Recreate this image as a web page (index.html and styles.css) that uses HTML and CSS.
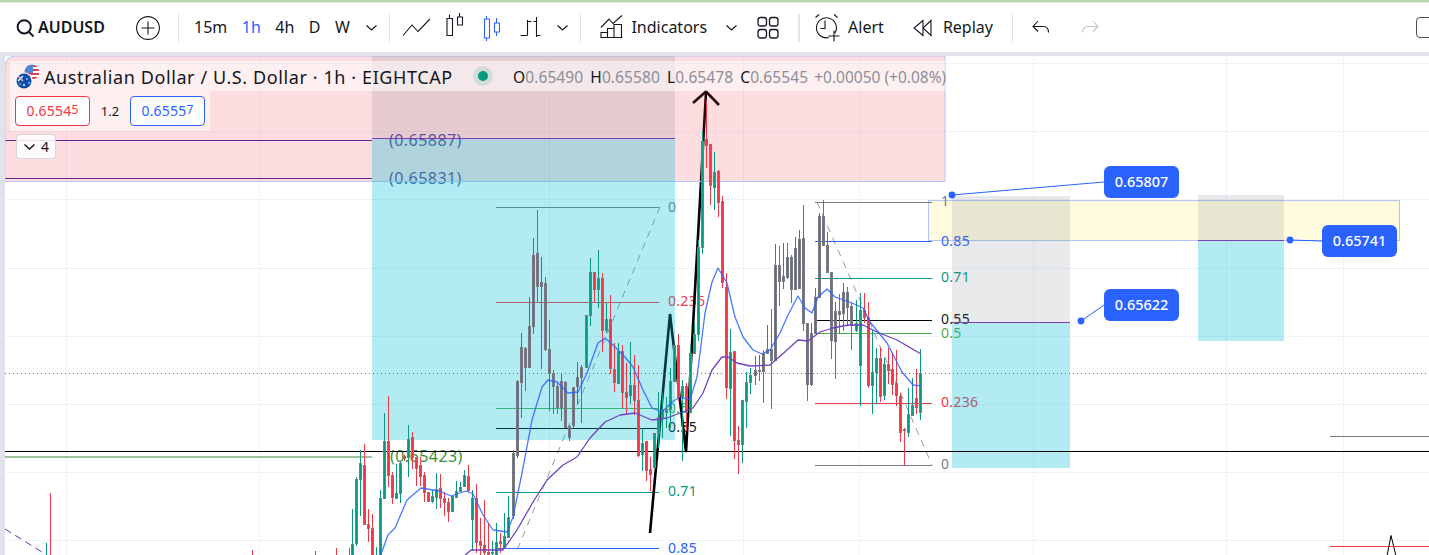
FILE: index.html
```html
<!DOCTYPE html>
<html lang="en">
<head>
<meta charset="utf-8">
<title>AUDUSD chart</title>
<link rel="stylesheet" href="styles.css">
</head>
<body>
<div class="topline"></div>
<header class="toolbar">
  <svg class="ic search" viewBox="0 0 18 28"><circle cx="8.2" cy="12.8" r="6.6"/><path d="M13 18l4.5 4.5"/></svg>
  <span class="symbol">AUDUSD</span>
  <svg class="ic plus" viewBox="0 0 24 28"><circle cx="12" cy="14" r="11.4"/><path d="M12 7.5v13M5.5 14h13"/></svg>
  <i class="sep s1"></i>
  <nav class="intervals">
    <span>15m</span><span class="active">1h</span><span>4h</span><span>D</span><span>W</span>
    <svg class="ic chev c1" viewBox="0 0 11 6"><path d="M.5.5l5 4.5 5-4.500"/></svg>
  </nav>
  <i class="sep s2"></i>
  <div class="charttypes">
    <svg class="ic cell" viewBox="0 0 38 28"><path d="M6 21.500l9-10.500 6 6.500 12-12.500"/></svg>
    <svg class="ic cell" viewBox="0 0 38 28"><path d="M14.500 4v-3.500M12 4.500h5.500v17h-5.500zM24.500 3v-4M22.500 3h5v8h-5z"/></svg>
    <svg class="ic cell blue" viewBox="0 0 38 28"><path d="M13.500 5v-3M11.500 5h5v19h-5zM13.500 24v3M23.500 4v5M21.500 9h5v9h-5zM23.500 18v4"/></svg>
    <svg class="ic cell" viewBox="0 0 38 28"><path d="M16.500 6v15.500M9.500 21.500h7M16.500 7.500h4M25.500 3v20M22.500 7.500h3M25.500 21.500h4"/></svg>
  </div>
  <svg class="ic chev c2" viewBox="0 0 11 6"><path d="M.5.5l5 4.500 5-4.500"/></svg>
  <i class="sep s3"></i>
  <svg class="ic ind" viewBox="0 0 23 28"><path d="M1 13.500L9 5l4 4.500 9-8M1 23.500v-5h6.500v5zM7.500 23.500v-9h6.500v9zM14 23.500v-13h7.500v13zM.5 23.500h22"/></svg>
  <span class="tb-label ind-label">Indicators</span>
  <svg class="ic chev c3" viewBox="0 0 11 6"><path d="M.5.5l5 4.500 5-4.500"/></svg>
  <svg class="ic layouts" viewBox="0 0 22 28"><rect x="1" y="3.500" width="8.500" height="8.500" rx="2.500"/><rect x="12.500" y="3.500" width="8.500" height="8.500" rx="2.500"/><rect x="1" y="15.500" width="8.500" height="8.500" rx="2.500"/><rect x="12.500" y="15.500" width="8.500" height="8.500" rx="2.500"/></svg>
  <i class="sep s4"></i>
  <svg class="ic alert" viewBox="0 0 26 28"><path d="M15 23.500a10 10 0 1 1 6-4.500M11 6.500v8H6.500M1.500 3.500L5 .5M20 .5l3.500 3M20 16.500v11M14.500 22h11"/></svg>
  <span class="tb-label alert-label">Alert</span>
  <svg class="ic replay" viewBox="0 0 19 28"><path d="M10 6.500L1 14l9 7.500zM18 6.500L10 14l8 7.500z"/></svg>
  <span class="tb-label replay-label">Replay</span>
  <i class="sep s5"></i>
  <svg class="ic undo" viewBox="0 0 18 28"><path d="M6 7L1 12.500l5 5M1 12.500h10c3.500 0 5.500 2.500 5.500 6"/></svg>
  <svg class="ic redo" viewBox="0 0 18 28"><path d="M12 7l5 5.500-5 5M17 12.500H7c-3.500 0-5.500 2.500-5.500 6"/></svg>
  <i class="winbox"></i>
</header>
<div class="gutter"></div>
<main class="workspace">
  <div class="rail"></div>
  <section class="chart">
    <svg class="plot" viewBox="5 56 1424 499" width="1424" height="499">
      <defs>
        <clipPath id="flag-us"><circle cx="32" cy="71" r="7.500"/></clipPath>
      </defs>
      <path class="grid" d="M5 63.500H1429M5 131.500H1429M5 199.500H1429M5 268.500H1429M5 336.500H1429M5 404.500H1429M5 472.500H1429M5 540.500H1429M66.500 56V555M259.500 56V555M549.500 56V555M743.500 56V555M859.500 56V555M1033.500 56V555M1226.500 56V555M1343.500 56V555"/>
      <rect class="box-yellow" x="928.500" y="200.500" width="471" height="40"/>

      <path class="l-purple" d="M5 140.500H372M5 178.500H372"/>
      <path class="l-green" d="M5 457H372"/>
      <path class="l-dash-purple" d="M5 529L50 557"/>
      <path class="l-trend" d="M660 207L515 555"/>
      <path class="l-trend" d="M817 202L932 465"/>

      <path class="f-gray" d="M496 207.500H659"/><path class="f-red" d="M496 302.500H659"/><path class="f-green" d="M496 408.500H659"/><path class="f-black" d="M496 428.500H659"/><path class="f-teal" d="M496 492.500H659"/><path class="f-blue" d="M496 548.500H659"/>
      <path class="f-gray" d="M815 202.500H932"/><path class="f-blue" d="M815 241.500H932"/><path class="f-teal" d="M815 278.500H932"/><path class="f-black" d="M815 320.500H932"/><path class="f-green" d="M815 333.500H932"/><path class="f-red" d="M815 403.500H932"/><path class="f-gray" d="M815 465.500H932"/>
      <path class="f-gray" d="M1330 436.500H1429"/><path class="f-red" d="M1330 546.500H1429"/>

      <text class="lbl t-gray" x="668" y="212">0</text>
      <text class="lbl t-red" x="668" y="306">0.236</text>
      <text class="lbl t-green" x="668" y="413">0.5</text>
      <text class="lbl t-black" x="668" y="432">0.55</text>
      <text class="lbl t-teal" x="668" y="496">0.71</text>
      <text class="lbl t-blue" x="668" y="553">0.85</text>
      <text class="lbl t-gray" x="941" y="206">1</text>
      <text class="lbl t-blue" x="941" y="246">0.85</text>
      <text class="lbl t-teal" x="941" y="282">0.71</text>
      <text class="lbl t-black" x="941" y="324">0.55</text>
      <text class="lbl t-green" x="941" y="338">0.5</text>
      <text class="lbl t-red" x="941" y="407">0.236</text>
      <text class="lbl t-gray" x="941" y="469">0</text>
      <text class="price t-indigo" x="389" y="146">(0.65887)</text>
      <text class="price t-indigo" x="389" y="184">(0.65831)</text>
      <text class="price t-fgreen" x="390" y="462">(0.65423)</text>

      <path class="pencil" d="M650 533L670 314L686 452L706 92"/>
      <path class="pencil" d="M693 103L706 91.500L719 105"/>
      <path class="pencil thin" d="M1387 556L1391 535.500L1396 556"/>

      <path class="box-red" d="M5 66a10 10 0 0 1 10-10H945V181.500H5z"/>
      <rect class="stop" x="372" y="56" width="303" height="82"/>
      <rect class="target" x="372" y="138" width="303" height="302"/>
      <rect class="stop" x="952" y="196" width="118" height="126"/>
      <rect class="target" x="952" y="322" width="118" height="146"/>
      <rect class="stop" x="1198" y="195" width="86" height="45"/>
      <rect class="target" x="1198" y="240" width="86" height="101"/>
      <path class="entry" d="M372 138.500H675M952 322.500H1070M1198 240.500H1284"/>

      <path class="l-hline" d="M5 451.500H1429"/>
      <path class="l-dotted" d="M5 373.500H1429"/>

      <g id="candles"></g>

      <path class="ma-purple" d="M463 557L471 550L503 550L517 530L533 502L547 480L563 465L577 457L590 438L605 422L620 415L635 413L652 420L667 418L680 413L693 408L703 393L712 370L722 357L728 357L737 363L750 366L770 365L787 350L798 340L808 341L820 332L833 328L848 325L863 325L877 332L897 340L921 354"/>
      <path class="ma-blue" d="M380 557L388 535L395 528L407 500L421 488L439 491L451 496L466 491L473 494L483 515L493 530L507 532L513 517L522 473L532 420L542 387L548 380L557 382L568 393L578 392L587 373L598 343L605 338L613 345L625 357L633 367L643 390L652 408L662 412L672 402L680 397L690 400L697 377L705 313L712 282L718 268L727 283L735 317L743 337L753 350L762 354L770 350L780 333L788 315L798 296L805 308L812 313L818 297L827 289L835 297L852 303L863 308L870 322L887 343L902 372L913 385L921 386"/>

      <path class="callout" d="M952 195L1104 182M1081 321L1104 305M1290 240L1322 241"/>
      <circle class="dot" cx="952" cy="195" r="3.400"/><circle class="dot" cx="1081" cy="321" r="3.400"/><circle class="dot" cx="1290" cy="240" r="3.400"/>
      <rect class="pill" x="1104" y="166" width="75" height="32" rx="6"/><text class="pill-text" x="1141.500" y="187">0.65807</text>
      <rect class="pill" x="1104" y="289" width="75" height="32" rx="6"/><text class="pill-text" x="1141.500" y="310">0.65622</text>
      <rect class="pill" x="1322" y="225" width="75" height="32" rx="6"/><text class="pill-text" x="1359.500" y="246">0.65741</text>
    </svg>

    <div class="legend">
      <div class="legend-row title-row">
        <svg class="flag" viewBox="16 62 24 26" width="24" height="26">
          <g clip-path="url(#flag-us)"><rect x="24" y="63" width="16" height="16" fill="#fff"/><path d="M24 65h16M24 69h16M24 73h16M24 77h16" stroke="#e0434f" stroke-width="2"/><rect x="24" y="63" width="9" height="9" fill="#4f86d6"/></g>
          <circle cx="24" cy="80" r="8.700" fill="#fdeef0"/>
          <circle cx="24" cy="80" r="7.500" fill="#0a4fae"/>
          <path d="M18 75l5 5M23 75l-5 5" stroke="#fff" stroke-width="1.300"/><path d="M18 75l5 5" stroke="#e0434f" stroke-width=".6"/>
          <circle cx="27" cy="78" r=".8" fill="#fff"/><circle cx="29" cy="82" r=".8" fill="#fff"/><circle cx="24" cy="84" r="1" fill="#fff"/><circle cx="20" cy="83" r=".7" fill="#fff"/>
        </svg>
        <span class="title">Australian Dollar / U.S. Dollar · 1h · EIGHTCAP</span>
        <span class="status"><i></i></span>
        <span class="ohlc first"><b>O</b>0.65490</span>
        <span class="ohlc"><b>H</b>0.65580</span>
        <span class="ohlc"><b>L</b>0.65478</span>
        <span class="ohlc"><b>C</b>0.65545</span>
        <span class="ohlc chg">+0.00050 (+0.08%)</span>
      </div>
      <div class="legend-row quote-row">
        <span class="quote sell">0.6554<sup>5</sup></span>
        <span class="spread">1.2</span>
        <span class="quote buy">0.6555<sup>7</sup></span>
      </div>
      <div class="collapse">
        <svg class="ic chev-sm" viewBox="0 0 11 6"><path d="M.5.5l5 4.500 5-4.500"/></svg>
        <span>4</span>
      </div>
    </div>
  </section>
</main>
<script src="chart.js"></script>
</body>
</html>
```
FILE: styles.css
```css
* { box-sizing: border-box; }
html, body { margin: 0; height: 555px; overflow: hidden; background: #fff; }
body { font-family: "Noto Sans", "Open Sans", sans-serif; color: #131722; display: flex; flex-direction: column; }

.topline { height: 3px; background: linear-gradient(#b9d6b2 0 2px, #dfe9da 2px); flex: none; }
.toolbar { height: 49px; flex: none; display: flex; align-items: center; padding-left: 16px; font-size: 16px; background: #fff; overflow: hidden; }
.toolbar span { padding-bottom: 2px; }
.gutter { height: 4px; flex: none; background: #e0e3eb; }
.workspace { flex: 1; display: flex; min-height: 0; }
.rail { width: 5px; flex: none; background: #e0e3eb; }
.chart { position: relative; flex: 1; overflow: hidden; border-top-left-radius: 6px; background: #fff; }
.plot { display: block; }

.ic { flex: none; fill: none; stroke: #131722; stroke-width: 1.1; height: 28px; overflow: visible; }
.search { width: 18px; stroke-width: 2; }
.symbol { font-weight: 600; margin-left: 4px; width: 98px; }
.plus { width: 24px; }
.sep { flex: none; width: 1px; height: 28px; background: #e0e3eb; }
.s1 { margin-left: 18px; }
.intervals { display: flex; align-items: center; gap: 14.5px; margin-left: 15px; }
.intervals .active { color: #2962ff; }
.chev { width: 11px; height: 6px; stroke-width: 1.2; }
.c1 { margin-left: 2px; }
.s2 { margin-left: 12px; }
.charttypes { display: flex; margin-left: 7px; }
.cell { width: 38px; }
.cell.blue { stroke: #2962ff; }
.c2 { margin-left: 8px; }
.s3 { margin-left: 12px; }
.ind { width: 23px; margin-left: 19px; }
.ind-label { margin-left: 8px; }
.c3 { margin-left: 19px; }
.layouts { width: 22px; margin-left: 20px; stroke-width: 1.3; }
.s4 { margin-left: 19px; width: 2px; }
.alert { width: 26px; margin-left: 14px; }
.alert-label { margin-left: 8px; }
.replay { width: 19px; margin-left: 29px; }
.replay-label { margin-left: 11px; }
.s5 { margin-left: 19px; }
.undo { width: 18px; margin-left: 19px; }
.redo { width: 18px; margin-left: 31px; stroke: #c4c5c9; }
.winbox { flex: none; width: 24px; height: 21px; margin-left: auto; margin-right: -11px; border: 1.5px solid #4a4d57; border-radius: 4px; }

/* plot */
.grid { stroke: #f0f3fa; stroke-width: 1; fill: none; }
.plot path { fill: none; }
.l-purple { stroke: #4a1f9e; }
.l-green { stroke: #388e3c; stroke-width: 1.2; }
.l-dash-purple { stroke: #5e35b1; stroke-dasharray: 7 5; }
.l-trend { stroke: #9598a1; stroke-dasharray: 7 6; }
.l-hline { stroke: #000; stroke-width: 1; }
.l-dotted { stroke: #089981; stroke-dasharray: 1 3; }
.f-gray { stroke: #787b86; }
.f-red { stroke: #f23645; }
.f-green { stroke: #4caf50; }
.f-black { stroke: #000; }
.f-teal { stroke: #089981; }
.f-blue { stroke: #2962ff; }
.lbl { font-size: 14px; letter-spacing: .3px; }
.price { font-size: 16px; letter-spacing: .45px; }
.t-gray { fill: #787b86; }
.t-red { fill: #f23645; }
.t-green { fill: #4caf50; }
.t-black { fill: #131722; }
.t-teal { fill: #089981; }
.t-blue { fill: #2962ff; }
.t-indigo { fill: #3f51a5; }
.t-fgreen { fill: #388e3c; }
.plot .pencil { stroke: #000; stroke-width: 2.6; stroke-linejoin: miter; }
.plot .pencil.thin { stroke-width: 1; }
.plot .box-yellow { fill: #fffbdf; stroke: #b2c6f5; }
.plot .box-red { fill: rgba(242, 54, 69, .17); stroke: #b2c6f5; stroke-width: 1; }
.stop { fill: rgba(120, 123, 134, .17); }
.target { fill: rgba(0, 188, 212, .3); }
.plot .entry { stroke: #7e3fb5; }
.wick-g { stroke: #089981; }
.wick-r { stroke: #f23645; }
.body-g { fill: #089981; stroke: #787b86; }
.body-r { fill: #f23645; stroke: #787b86; }
.plot .ma-blue { stroke: #2962ff; stroke-width: 1.3; stroke-linejoin: round; opacity: .85; }
.plot .ma-purple { stroke: #6f42c1; stroke-width: 1.3; stroke-linejoin: round; }
.plot .callout { stroke: #2962ff; }
.dot { fill: #2962ff; }
.pill { fill: #2962ff; }
.pill-text { fill: #fff; font-size: 14.5px; font-weight: 500; text-anchor: middle; }

/* legend */
.legend { position: absolute; left: 5px; top: 5px; display: flex; flex-direction: column; align-items: flex-start; }
.legend-row { display: flex; align-items: center; background: rgba(255, 255, 255, .55); }
.title-row { width: 935px; height: 30px; padding: 2px 0 0 6px; }
.flag { flex: none; margin-top: -3px; overflow: visible; }
.title { margin-left: 4px; font-size: 18px; letter-spacing: .6px; white-space: nowrap; width: 408px; }
.status { flex: none; width: 20px; height: 20px; margin-left: 21px; margin-top: -2px; border-radius: 50%; background: rgba(8, 153, 129, .14); display: flex; align-items: center; justify-content: center; }
.status i { width: 10px; height: 10px; border-radius: 50%; background: #089981; }
.ohlc { font-size: 15.5px; color: #8b8e98; margin-left: 7px; letter-spacing: .1px; white-space: nowrap; }
.ohlc.first { margin-left: 20px; }
.ohlc b { font-weight: 400; color: #131722; }
.chg { margin-left: 6px; letter-spacing: 0; }
.quote-row { width: 200px; height: 40px; padding-left: 5px; font-size: 14px; }
.quote { width: 75px; height: 30px; border-radius: 4px; border: 1.5px solid; background: #fff; line-height: 27px; text-align: center; letter-spacing: .2px; }
.quote sup { font-size: 12px; line-height: 0; vertical-align: 2px; }
.sell { color: #f23645; }
.buy { color: #2962ff; }
.spread { width: 40px; text-align: center; font-size: 13px; color: #131722; }
.collapse { margin: 3px 0 0 6px; width: 40px; height: 25px; border: 1px solid #d6d8e0; border-radius: 4px; background: rgba(255, 255, 255, .85); display: flex; align-items: center; gap: 6px; padding-left: 7px; font-size: 14px; }
.chev-sm { width: 11px; height: 6px; stroke-width: 1.5; }
```
FILE: chart.js
```js
// Candle data as [high, bodyTop, bodyBottom, low, colour]; x is derived from start + step * index.
const G = "g", R = "r";
const segments = [
  { start: 352.7, step: 4, rows: [
    [509,544,560,560,G],[477,479,543,545,G],[450,463,479,515,G],[444,465,524,524,R],[509,524,528,541,R],
    [514,528,560,560,R],[547,556,560,560,G],[490,498,560,560,G],[413,441,498,498,G],[396,441,475,486,R],
    [472,475,497,503,R],[464,493,498,498,G],[462,463,493,502,G],[455,456,458,460,R],[425,439,457,476,G],
    [432,437,457,468,R],[457,457,468,485,R],[457,465,476,485,R],[472,475,492,501,R],[492,492,501,501,R],
    [490,496,501,502,G],[473,489,497,508,G],[474,488,498,507,R],[492,498,502,515,R],[498,502,511,521,R],
    [496,496,511,511,G],[481,491,497,497,G],[482,487,491,491,G],[470,475,486,486,G],[465,476,490,491,R],
    [490,498,519,550,G],[484,498,542,552,R],[518,541,545,560,R],[500,545,552,560,R],[523,552,560,560,R],
    [541,552,553,560,G],[523,542,560,560,G],[533,541,543,552,R],[513,536,548,548,G],[496,517,537,537,G]
  ]},
  { start: 513.3, step: 4.04, rows: [
    [450,453,515,518,G],[380,381,455,457,G],[333,347,382,417,G],[347,348,367,390,R],[297,326,367,367,G],
    [238,255,326,333,G],[210,253,286,301,R],[257,282,286,368,G],[277,283,349,350,R],[320,349,373,410,R],
    [370,373,386,413,R],[382,386,407,413,R],[373,381,407,420,G],[381,382,427,427,R],[425,426,437,440,G],
    [387,387,425,427,G],[362,377,386,403,G],[365,367,377,422,G],[315,315,367,367,G],[258,272,315,325,G],
    [272,272,289,301,R],[250,278,289,307,G],[273,278,330,351,R],[303,319,330,332,G],[295,319,368,373,R],
    [343,369,382,391,R],[343,351,383,383,G],[345,351,392,407,R],[363,392,397,413,R],[342,385,395,403,G],
    [355,385,400,414,R],[365,400,455,456,R]
  ]},
  { start: 642.7, step: 4, rows: [
    [428,443,454,470,G],[441,441,470,480,R],[457,469,474,490,R],[433,433,467,467,G],[392,417,433,447,G],
    [393,409,417,437,G],[397,409,412,427,G],[368,381,409,427,G],[345,345,381,381,G],[334,345,397,400,R],
    [380,386,397,460,G],[383,386,412,430,R],[345,353,412,412,G],[323,334,353,353,G],[240,247,334,340,G],
    [131,141,247,253,G],[101,139,145,167,R],[144,144,185,204,R],[152,172,187,209,G],[170,171,202,216,R]
  ]},
  { start: 722.7, step: 4.04, rows: [
    [196,201,282,287,R],[273,287,387,398,R],[329,352,388,435,G],[351,351,440,458,R],[426,440,444,473,R],
    [400,400,444,462,G],[372,382,401,427,G],[368,375,382,393,G],[356,370,375,384,G],[355,370,371,380,R],
    [350,353,371,402,G],[325,349,353,353,G],[309,349,360,408,R],[244,265,360,360,G],[246,265,281,305,R],
    [243,276,281,288,G],[243,257,277,278,G],[255,257,289,302,R],[237,248,289,289,G],[230,239,288,288,G],
    [205,238,323,330,R],[323,323,384,400,R],[323,333,384,385,G],[288,297,333,333,G],[213,216,297,297,G],
    [200,216,245,245,R],[232,245,272,272,R],[272,272,340,358,R],[302,311,341,378,G],[294,311,314,333,R],
    [283,292,313,330,G],[287,292,307,325,R],[303,306,325,349,R],[300,323,330,331,G],[293,310,365,405,G],
    [293,310,317,322,R],[302,317,385,387,R],[330,372,385,413,G],[348,358,372,403,G],[348,358,396,401,R],
    [358,364,395,399,G],[348,364,370,383,R],[353,369,384,394,R],[350,383,395,405,R],[393,396,432,441,R],
    [428,429,430,465,R],[388,414,432,436,G],[378,405,415,415,G],[369,398,407,413,R],[349,373,412,419,G]
  ]}
];
const strays = [[46.5,543,556,G],[50.5,493,556,R],[252.5,550,556,R],[315.5,551,556,G],[336.5,548,556,R],[349.5,548,556,G]];

const NS = "http://www.w3.org/2000/svg";
const layer = document.getElementById("candles");
function add(tag, attrs) {
  const el = document.createElementNS(NS, tag);
  for (const k in attrs) el.setAttribute(k, attrs[k]);
  layer.appendChild(el);
}
function wick(x, hi, lo, c) {
  add("path", { d: `M${x} ${hi}V${lo + 1}`, class: `wick-${c}` });
}
strays.forEach(([x, hi, lo, c]) => wick(x, hi, lo, c));
segments.forEach(({ start, step, rows }) => {
  rows.forEach(([hi, top, bot, lo, c], i) => {
    const x = Math.floor(start + step * i) + 0.5;
    wick(x, hi, lo, c);
    add("rect", { x: x - 1, y: top + 0.5, width: 2, height: Math.max(bot - top, 1), class: `body-${c}` });
  });
});
```
